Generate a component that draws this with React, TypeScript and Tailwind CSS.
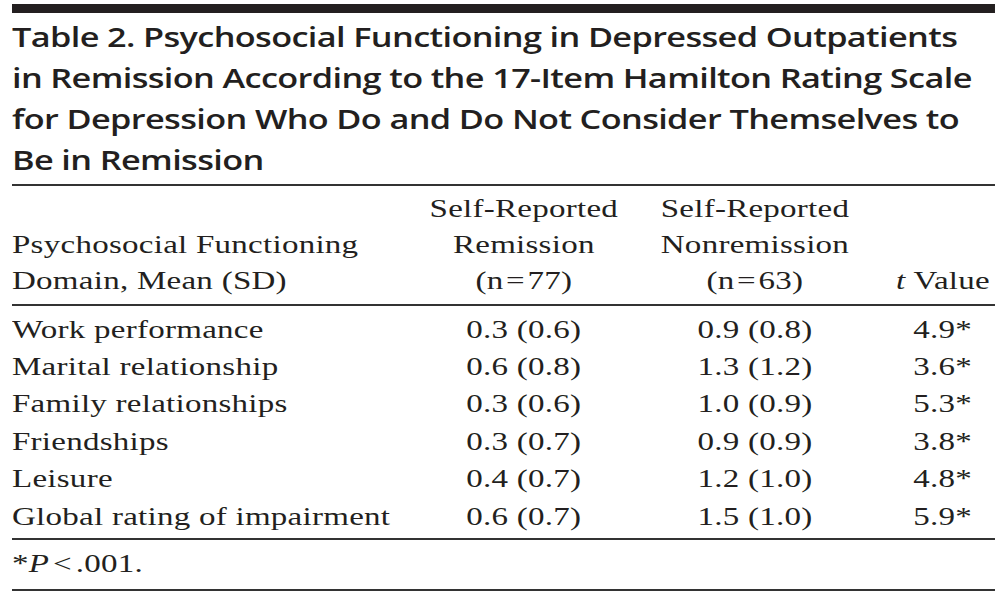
const rows = [
  ["Work performance", "0.3 (0.6)", "0.9 (0.8)", "4.9*"],
  ["Marital relationship", "0.6 (0.8)", "1.3 (1.2)", "3.6*"],
  ["Family relationships", "0.3 (0.6)", "1.0 (0.9)", "5.3*"],
  ["Friendships", "0.3 (0.7)", "0.9 (0.9)", "3.8*"],
  ["Leisure", "0.4 (0.7)", "1.2 (1.0)", "4.8*"],
  ["Global rating of impairment", "0.6 (0.7)", "1.5 (1.0)", "5.9*"],
];

const serif = { fontFamily: '"Liberation Serif", "Times New Roman", serif' };

// the scan is stretched sideways, so the whole table is widened with scale-x
export default function App() {
  return (
    <div className="w-[1007px] h-[595px] bg-white text-[#231f20] overflow-hidden">
      <div className="w-[774px] ml-[12px] pt-[4px] origin-left scale-x-[1.27]">
        <div className="h-[9px] bg-[#231f20]" />
        <h1
          className="mt-[3px] text-[27px] font-semibold leading-[41px] tracking-[-0.5px] whitespace-nowrap"
          style={{ fontFamily: '"Open Sans", "Noto Sans", sans-serif' }}
        >
          Table 2. Psychosocial Functioning in Depressed Outpatients
          <br />
          in Remission According to the 17-Item Hamilton Rating Scale
          <br />
          for Depression Who Do and Do Not Consider Themselves to
          <br />
          Be in Remission
        </h1>
        <div className="mt-[4px] h-[2px] bg-[#333]" />

        <div className="text-[26px] tracking-[0.2px]" style={serif}>
          <div className="grid grid-cols-[315px_176px_188px_1fr] items-end leading-[36px] pt-[5px] pb-[5px]">
            <div>
              Psychosocial Functioning
              <br />
              Domain, Mean (SD)
            </div>
            <div className="text-center">
              Self-Reported
              <br />
              Remission
              <br />
              (n<span className="mx-[2px]">=</span>77)
            </div>
            <div className="text-center">
              Self-Reported
              <br />
              Nonremission
              <br />
              (n<span className="mx-[2px]">=</span>63)
            </div>
            <div className="text-right pr-[4px]">
              <i>t</i> Value
            </div>
          </div>
          <div className="h-[2px] bg-[#333]" />

          <div className="pt-[4.5px] pb-[3px] leading-[37.4px]">
            {rows.map(([label, a, b, t]) => (
              <div key={label} className="grid grid-cols-[315px_176px_188px_1fr]">
                <div>{label}</div>
                <div className="text-center">{a}</div>
                <div className="text-center">{b}</div>
                <div className="text-right pr-[18px]">{t}</div>
              </div>
            ))}
          </div>
          <div className="h-[2px] bg-[#333]" />

          <div className="h-[49px] pt-[9px] leading-[30px]">
            *<i>P</i>
            <span className="mx-[3px]">&lt;</span>.001.
          </div>
          <div className="h-[2px] bg-[#333]" />
        </div>
      </div>
    </div>
  );
}
